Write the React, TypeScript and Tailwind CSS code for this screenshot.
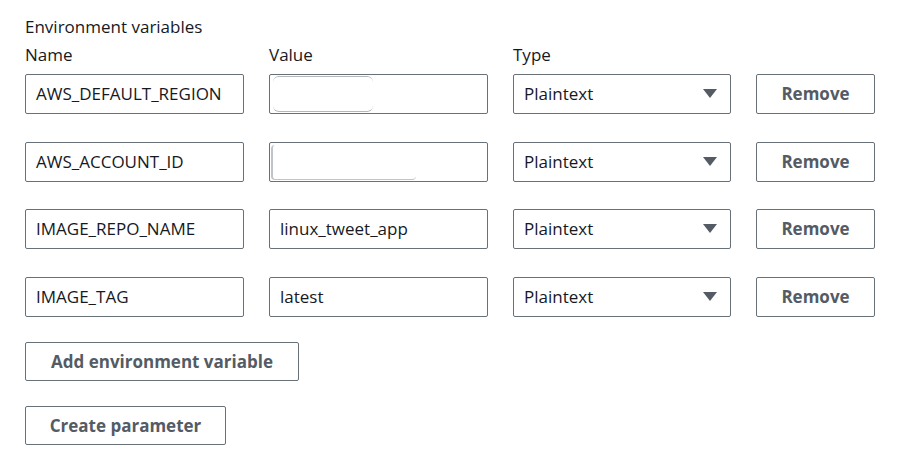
const rows = [
  { name: 'AWS_DEFAULT_REGION', value: '', blur: 'short' },
  { name: 'AWS_ACCOUNT_ID', value: '', blur: 'long' },
  { name: 'IMAGE_REPO_NAME', value: 'linux_tweet_app', blur: '' },
  { name: 'IMAGE_TAG', value: 'latest', blur: '' },
];

const font = { fontFamily: '"Open Sans", "Noto Sans", Arial, sans-serif' };

const App = () => {
  return (
    <div className="w-[900px] h-[460px] bg-white text-[#16191f] pl-[25px] pt-[15px]" style={font}>
      <div className="text-[17px] leading-[24px]">Environment variables</div>
      <div className="mt-[4px] grid grid-cols-[219px_219px_218px_119px] gap-x-[25px] text-[17px] leading-[24px]">
        <div>Name</div>
        <div>Value</div>
        <div>Type</div>
        <div></div>
      </div>
      <div className="mt-[7px] flex flex-col gap-[27.6px]">
        {rows.map((row) => (
          <div key={row.name} className="grid grid-cols-[219px_219px_218px_119px] gap-x-[25px] h-[40px]">
            <div className="border border-[#687078] rounded-[2px] flex items-center px-[10px] text-[17px]">
              {row.name}
            </div>
            <div className="relative border border-[#687078] rounded-[2px] flex items-center px-[10px] text-[17px] overflow-hidden">
              {row.value}
              {row.blur === 'short' && (
                <div className="absolute left-[3px] top-[1px] bottom-[1px] w-[100px] border-t border-b border-[#b4b8bc] rounded-[6px] bg-white blur-[0.4px]" />
              )}
              {row.blur === 'long' && (
                <div className="absolute left-[1px] top-[2px] bottom-[1px] w-[145px] border-l-2 border-b border-[#c0c4c8] rounded-[4px] bg-white blur-[0.4px]" />
              )}
            </div>
            <div className="border border-[#687078] rounded-[2px] flex items-center justify-between pl-[10px] pr-[13px] text-[17px]">
              <span>Plaintext</span>
              <svg width="14" height="10" viewBox="0 0 14 10">
                <path d="M0 0 H14 L7 9 Z" fill="#545b64" />
              </svg>
            </div>
            <button className="border border-[#687078] rounded-[2px] flex items-center justify-center text-[17px] font-bold text-[#545b64]">
              Remove
            </button>
          </div>
        ))}
      </div>
      <button className="mt-[25px] w-[274px] h-[39px] border border-[#687078] rounded-[2px] flex items-center justify-center text-[17px] font-bold text-[#545b64]">
        Add environment variable
      </button>
      <button className="mt-[25px] w-[201px] h-[39px] border border-[#687078] rounded-[2px] flex items-center justify-center text-[17px] font-bold text-[#545b64]">
        Create parameter
      </button>
    </div>
  );
};

export default App;
